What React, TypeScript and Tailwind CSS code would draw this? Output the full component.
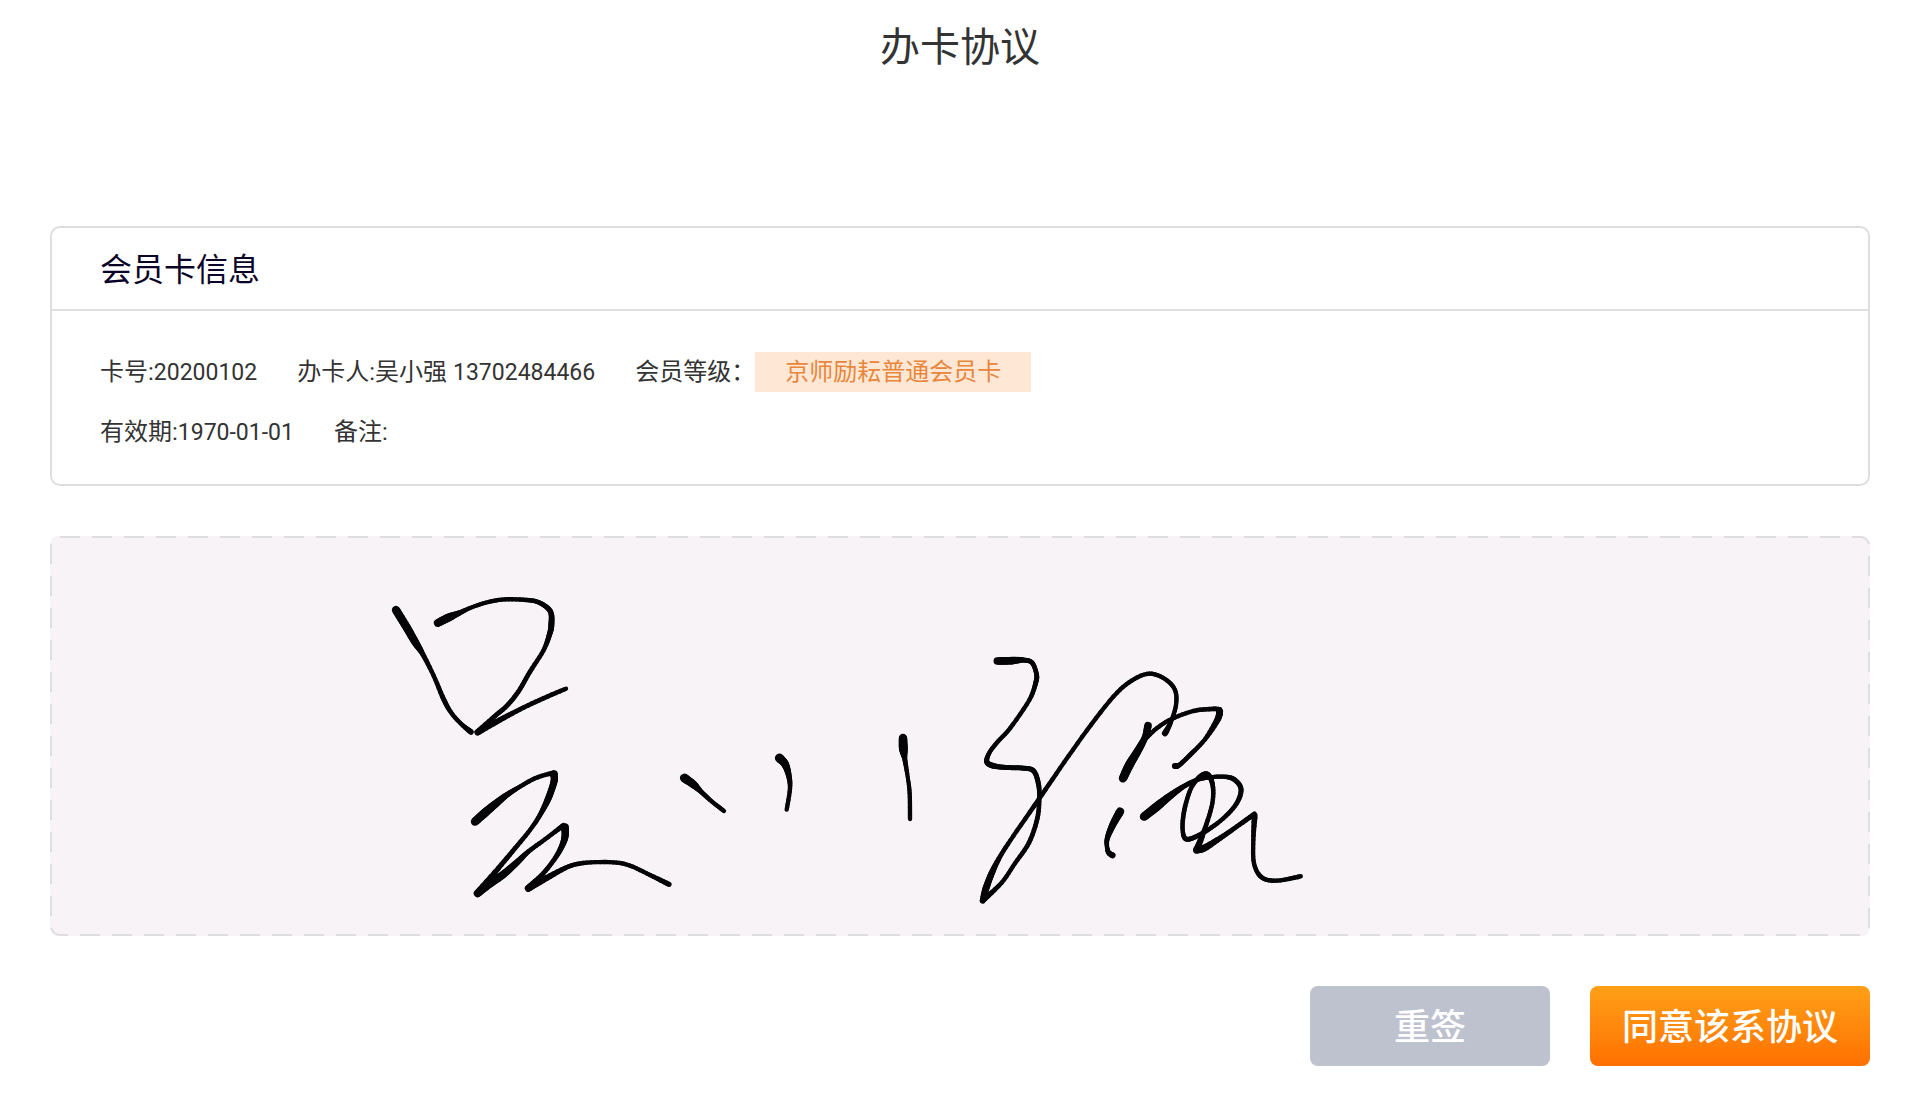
import type { ReactNode } from "react";

// Each pen sample is [x, y, nib width], in thirds of a pixel.
type Sample = [number, number, number];
type Group = { origin: [number, number]; strokes: Sample[][] };

const SIGNATURE: Group[] = [
  {
    origin: [330, 44],
    strokes: [
      [[48, 90, 24], [80, 142, 24], [106, 187, 22], [128, 222, 14], [160, 285, 12], [192, 360, 14], [215, 400, 12], [245, 433, 12], [273, 456, 16]],
      [[173, 129, 22], [205, 113, 24], [240, 98, 14], [275, 82, 11], [325, 66, 12], [375, 58, 12], [440, 60, 12], [478, 68, 13], [511, 94, 15], [514, 135, 17], [508, 165, 15], [490, 212, 12], [450, 275, 13], [415, 335, 13], [380, 378, 13], [345, 408, 13], [293, 457, 18]],
      [[293, 457, 18], [350, 425, 16], [420, 388, 13], [490, 355, 13], [558, 326, 12]],
    ],
  },
  {
    origin: [390, 204],
    strokes: [
      [[105, 245, 24], [135, 218, 25], [165, 193, 22], [200, 165, 16], [235, 143, 12], [285, 115, 12], [340, 98, 13]],
      [[342, 102, 22], [342, 125, 20], [325, 175, 19], [300, 225, 13], [270, 270, 12], [225, 325, 13], [175, 385, 14], [113, 460, 22]],
      [[113, 460, 22], [145, 435, 22], [190, 403, 22], [230, 368, 18], [265, 335, 13], [315, 298, 12], [370, 256, 14]],
      [[375, 261, 22], [375, 290, 20], [365, 320, 16], [345, 355, 13], [310, 400, 13], [265, 445, 20]],
      [[265, 445, 20], [320, 414, 17], [385, 380, 13], [440, 368, 12], [520, 367, 12], [570, 377, 12], [630, 405, 12], [687, 433, 15]],
      [[733, 114, 26], [760, 133, 22], [780, 152, 14], [815, 184, 12], [852, 213, 12]],
      [[1018, 54, 26], [1035, 72, 22], [1046, 105, 16], [1050, 145, 12], [1040, 209, 12]],
    ],
  },
  {
    origin: [690, 184],
    strokes: [[[489, 54, 24], [490, 85, 26], [494, 115, 14], [503, 170, 11], [509, 220, 12], [510, 297, 12]]],
  },
  {
    origin: [910, 104],
    strokes: [
      [[112, 63, 22], [155, 62, 22], [190, 60, 14], [216, 68, 13], [229, 100, 13], [228, 125, 14], [208, 180, 12], [150, 265, 12], [115, 303, 12], [90, 335, 12], [80, 362, 14], [92, 375, 16], [130, 382, 14], [185, 384, 14], [220, 392, 14], [235, 430, 14], [238, 475, 12], [232, 535, 13], [207, 608, 13], [165, 670, 12], [125, 728, 12], [68, 782, 16]],
      [[68, 782, 16], [78, 745, 20], [95, 700, 18], [120, 650, 13], [160, 588, 12], [235, 480, 13], [300, 385, 12], [380, 272, 12], [460, 170, 12], [515, 122, 12], [568, 101, 12], [615, 117, 12], [645, 150, 12], [648, 195, 12], [633, 245, 12], [615, 280, 18]],
      [[480, 515, 24], [458, 555, 20], [442, 595, 14], [441, 620, 12], [446, 638, 14], [458, 646, 17]],
    ],
  },
  {
    origin: [1040, 124],
    strokes: [
      [[99, 355, 24], [118, 315, 26], [145, 270, 22], [165, 232, 18], [174, 197, 22]],
      [[165, 238, 12], [200, 205, 12], [245, 177, 12], [310, 153, 12], [365, 147, 13], [390, 148, 13]],
      [[389, 155, 20], [382, 180, 18], [345, 238, 12], [300, 285, 13], [268, 315, 13], [255, 318, 18]],
      [[162, 470, 24], [200, 440, 26], [240, 408, 20], [280, 380, 14], [320, 360, 12], [360, 352, 12], [400, 350, 12], [432, 358, 14], [453, 387, 14], [440, 430, 13], [400, 475, 12], [345, 515, 13], [292, 538, 14], [278, 510, 12], [283, 450, 13], [303, 385, 12], [330, 350, 14], [353, 344, 16], [368, 375, 13], [367, 430, 12], [345, 505, 13], [320, 570, 20]],
      [[320, 570, 20], [345, 563, 20], [400, 528, 14], [440, 500, 13], [493, 462, 14]],
      [[494, 466, 17], [490, 540, 12], [492, 610, 12], [515, 652, 13], [560, 662, 12], [632, 649, 13]],
    ],
  },
];

const STEPS = 6;

function spline(a: number, b: number, c: number, d: number, t: number) {
  return 0.5 * (2 * b + (c - a) * t + (2 * a - 5 * b + 4 * c - d) * t * t + (3 * b - a - 3 * c + d) * t * t * t);
}

function smooth(samples: Sample[]): Sample[] {
  const out: Sample[] = [samples[0]];
  for (let i = 0; i < samples.length - 1; i++) {
    const a = samples[Math.max(i - 1, 0)];
    const b = samples[i];
    const c = samples[i + 1];
    const d = samples[Math.min(i + 2, samples.length - 1)];
    for (let s = 1; s <= STEPS; s++) {
      const t = s / STEPS;
      out.push([spline(a[0], b[0], c[0], d[0], t), spline(a[1], b[1], c[1], d[1], t), b[2] + (c[2] - b[2]) * t]);
    }
  }
  return out;
}

function Stroke({ samples }: { samples: Sample[] }) {
  const points = smooth(samples);
  return (
    <g>
      {points.slice(1).map((p, i) => (
        <line key={i} x1={points[i][0]} y1={points[i][1]} x2={p[0]} y2={p[1]} strokeWidth={(points[i][2] + p[2]) / 2 + 1} />
      ))}
    </g>
  );
}

function SignaturePad() {
  return (
    <section aria-label="签名" className="relative mt-[50px] rounded-lg bg-[#f7f3f7]">
      <svg className="absolute inset-0 size-full" aria-hidden="true">
        <rect className="h-[calc(100%-2px)] w-[calc(100%-2px)]" x="1" y="1" rx="9" fill="none" stroke="#dedde0" strokeWidth="2" strokeDasharray="20 12" />
      </svg>
      <svg viewBox="0 0 1820 400" className="relative block w-full" role="img" aria-label="吴小强" stroke="#050507" strokeLinecap="round">
        {SIGNATURE.map(({ origin, strokes }, i) => (
          <g key={i} transform={`translate(${origin[0]} ${origin[1]}) scale(${1 / 3})`}>
            {strokes.map((samples, j) => (
              <Stroke key={j} samples={samples} />
            ))}
          </g>
        ))}
      </svg>
    </section>
  );
}

function Field({ label, children }: { label: string; children?: ReactNode }) {
  return (
    <div className="flex items-baseline">
      <dt>{label}</dt>
      <dd>{children}</dd>
    </div>
  );
}

function Digits({ children }: { children: ReactNode }) {
  return <span className="text-[23px] leading-6">{children}</span>;
}

export default function App() {
  return (
    <main className="min-h-screen bg-white px-[50px] pb-[50px] font-[Roboto,'Noto_Sans_CJK_SC',sans-serif] text-[#333]">
      <h1 className="pt-5 text-center text-[40px] leading-[56px]">办卡协议</h1>

      <section className="mt-[150px] rounded-[10px] border-2 border-[#dedede]">
        <h2 className="border-b-2 border-[#dedede] px-12 pt-[18px] pb-[15px] text-[32px] leading-[48px] text-[#0a0528]">会员卡信息</h2>
        <dl className="flex flex-col gap-5 px-12 pt-[41px] pb-8 text-2xl leading-10">
          <div className="flex flex-wrap gap-x-10">
            <Field label="卡号:">
              <Digits>20200102</Digits>
            </Field>
            <Field label="办卡人:">
              吴小强 <Digits>13702484466</Digits>
            </Field>
            <Field label="会员等级：">
              <span className="block bg-[#ffe7d6] px-[30px] text-[#e8873c]">京师励耘普通会员卡</span>
            </Field>
          </div>
          <div className="flex flex-wrap gap-x-10">
            <Field label="有效期:">
              <Digits>1970-01-01</Digits>
            </Field>
            <Field label="备注:" />
          </div>
        </dl>
      </section>

      <SignaturePad />

      <div className="mt-[50px] flex justify-end gap-10 text-4xl font-medium text-white">
        <button type="button" className="h-20 w-60 rounded-lg bg-[#bec2cf] pt-1">重签</button>
        <button type="button" className="h-20 w-[280px] rounded-lg bg-linear-to-b from-[#ff9f17] to-[#ff7000] pt-1">同意该系协议</button>
      </div>
    </main>
  );
}
